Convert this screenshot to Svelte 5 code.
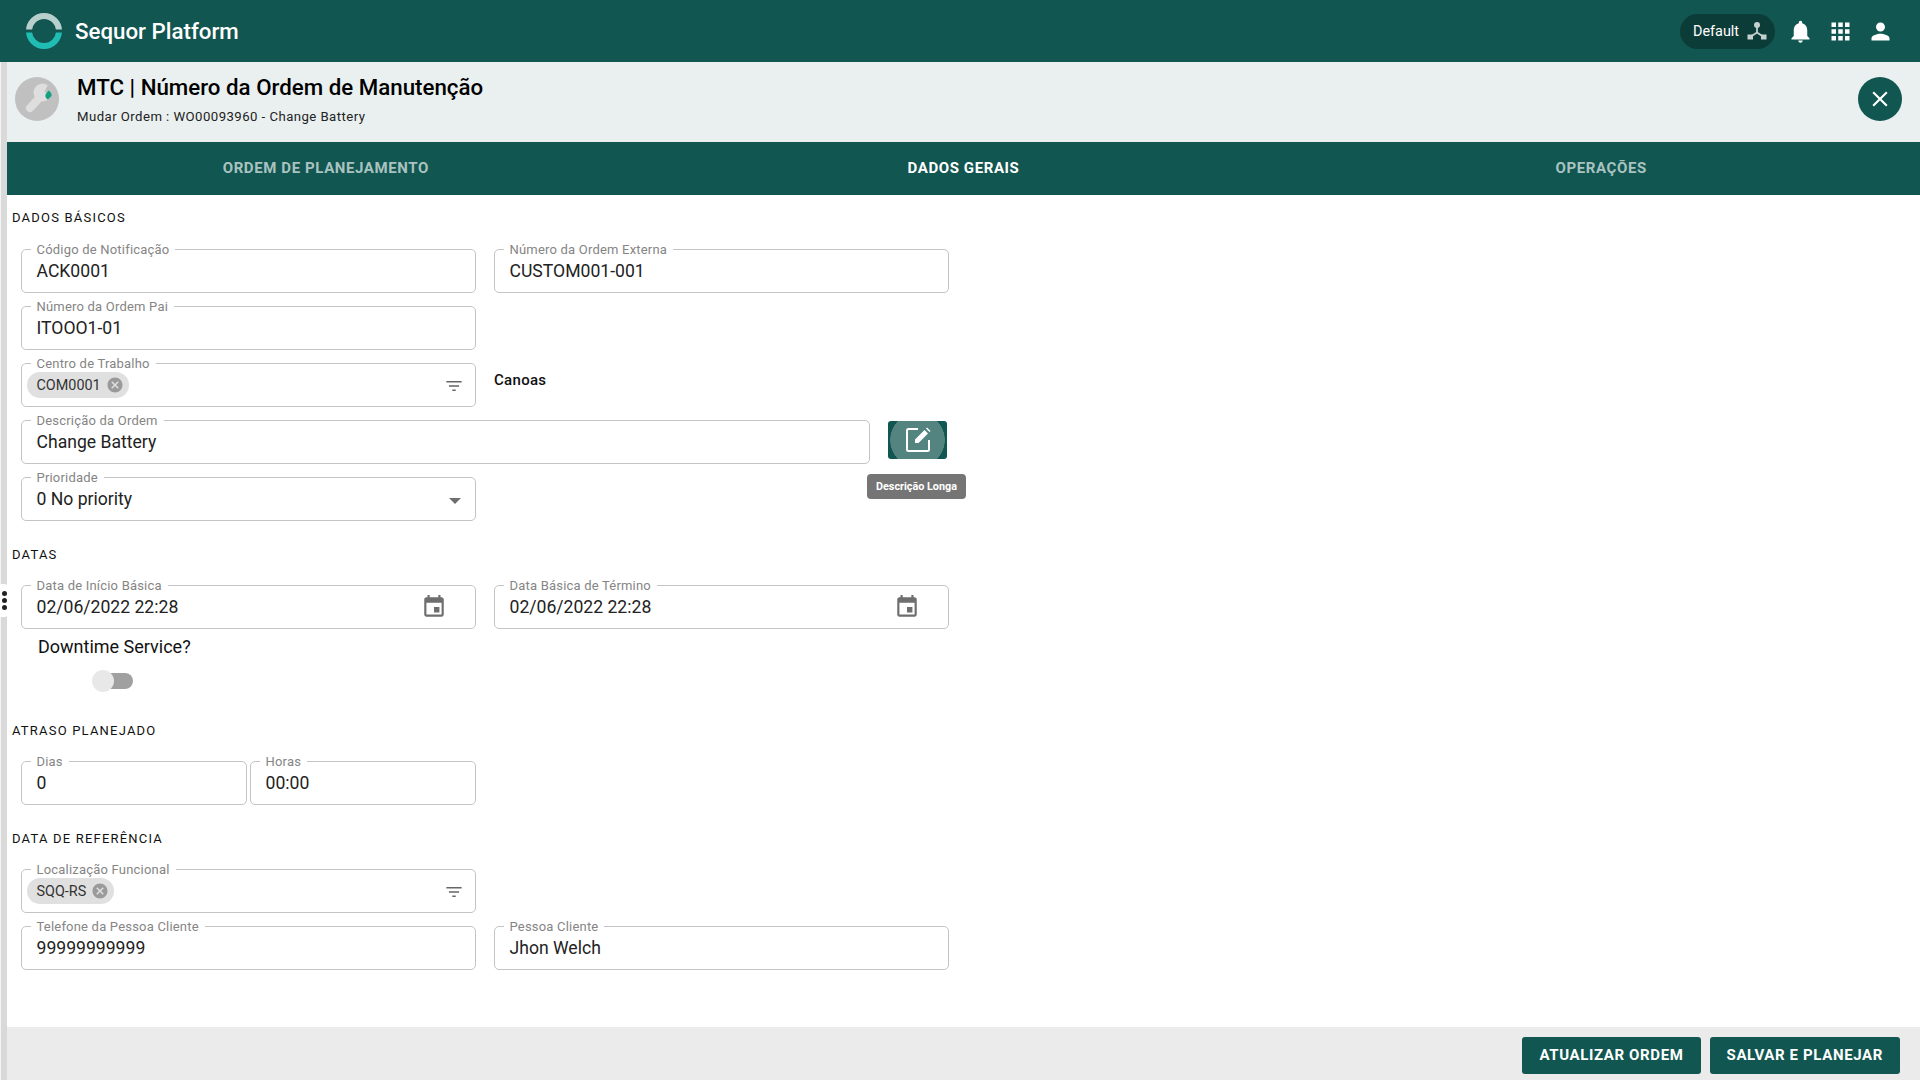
<script>
  const icons = {
    filter: "M10 18h4v-2h-4v2zM3 6v2h18V6H3zm3 7h12v-2H6v2z",
    event: "M17 12h-5v5h5v-5zM16 1v2H8V1H6v2H5c-1.11 0-1.99.9-1.99 2L3 19c0 1.1.89 2 2 2h14c1.1 0 2-.9 2-2V5c0-1.1-.9-2-2-2h-1V1h-2zm3 18H5V8h14v11z",
    cancel: "M12 2C6.47 2 2 6.47 2 12s4.47 10 10 10 10-4.47 10-10S17.53 2 12 2zm5 13.59L15.59 17 12 13.41 8.41 17 7 15.59 10.59 12 7 8.41 8.41 7 12 10.59 15.59 7 17 8.41 13.41 12 17 15.59z",
    bell: "M12 22c1.1 0 2-.9 2-2h-4c0 1.1.89 2 2 2zm6-6v-5c0-3.07-1.64-5.64-4.5-6.32V4c0-.83-.67-1.5-1.5-1.5s-1.5.67-1.5 1.5v.68C7.63 5.36 6 7.92 6 11v5l-2 2v1h16v-1l-2-2z",
    apps: "M4 8h4V4H4v4zm6 12h4v-4h-4v4zm-6 0h4v-4H4v4zm0-6h4v-4H4v4zm6 0h4v-4h-4v4zm6-10v4h4V4h-4zm-6 4h4V4h-4v4zm6 6h4v-4h-4v4zm0 6h4v-4h-4v4z",
    person: "M12 12c2.21 0 4-1.79 4-4s-1.79-4-4-4-4 1.79-4 4 1.79 4 4 4zm0 2c-2.67 0-8 1.34-8 4v2h16v-2c0-2.66-5.33-4-8-4z",
    close: "M19 6.41L17.59 5 12 10.59 6.41 5 5 6.41 10.59 12 5 17.59 6.41 19 12 13.41 17.59 19 19 17.59 13.41 12z"
  };
  const tabs = [
    { label: "ORDEM DE PLANEJAMENTO" },
    { label: "DADOS GERAIS", active: true },
    { label: "OPERAÇÕES" }
  ];
</script>

{#snippet icon(d, cls)}
  <svg class={cls} viewBox="0 0 24 24"><path {d} /></svg>
{/snippet}

{#snippet field(label, value, cls = "")}
  <div class="field {cls}">
    <span class="label">{label}</span>
    <span class="value">{value}</span>
  </div>
{/snippet}

{#snippet dateField(label, value)}
  <div class="field">
    <span class="label">{label}</span>
    <span class="value">{value}</span>
    {@render icon(icons.event, "cal")}
  </div>
{/snippet}

{#snippet chipField(label, value)}
  <div class="field">
    <span class="label">{label}</span>
    <span class="chip">{value}{@render icon(icons.cancel, "chip-x")}</span>
    {@render icon(icons.filter, "filter")}
  </div>
{/snippet}

<div class="app">
  <header class="topbar">
    <svg class="logo" viewBox="0 0 36 36">
      <clipPath id="logo-top"><rect x="0" y="0" width="36" height="16.500" /></clipPath>
      <clipPath id="logo-bottom"><rect x="0" y="19.500" width="36" height="16.500" /></clipPath>
      <circle cx="18" cy="18" r="15" fill="none" stroke="#b7d0cd" stroke-width="6" clip-path="url(#logo-top)" />
      <circle cx="18" cy="18" r="15" fill="none" stroke="#20bdb5" stroke-width="6" clip-path="url(#logo-bottom)" />
    </svg>
    <span class="brand">Sequor Platform</span>
    <div class="top-actions">
      <div class="pill">
        <span>Default</span>
        <svg class="hub" viewBox="0 0 20 20">
          <circle cx="10" cy="4" r="3" />
          <rect x="0.5" y="13.5" width="5.5" height="5" />
          <rect x="14" y="13.5" width="5.5" height="5" />
          <path d="M10 6v5.5M10 11.5L4 15.5M10 11.5l6 4" fill="none" stroke="#c4d0ce" stroke-width="1.8" />
        </svg>
      </div>
      {@render icon(icons.bell, "top-icon")}
      {@render icon(icons.apps, "top-icon")}
      {@render icon(icons.person, "top-icon")}
    </div>
  </header>

  <div class="body">
    <aside class="rail">
      <div class="handle"><i></i><i></i><i></i></div>
    </aside>

    <div class="page">
      <div class="head">
        <div class="avatar">
          <svg viewBox="0 0 44 44">
            <line x1="15" y1="31" x2="26" y2="19" stroke="#dedede" stroke-width="8" stroke-linecap="round" />
            <circle cx="27.500" cy="15.500" r="9" fill="#dedede" />
            <polygon points="29.500,14.500 34,6 42,13 33.500,18" fill="#c0c0c0" />
            <path d="M33.500 13.500C36 15 37 17 36.500 19L33 22.500C31 21.500 30 20 30.500 17.500z" fill="#12a07f" />
          </svg>
        </div>
        <div class="head-text">
          <h1>MTC | Número da Ordem de Manutenção</h1>
          <p>Mudar Ordem : WO00093960 - Change Battery</p>
        </div>
        <button class="close">{@render icon(icons.close, "close-icon")}</button>
      </div>

      <nav class="tabs">
        {#each tabs as tab}
          <div class="tab" class:active={tab.active}>{tab.label}</div>
        {/each}
      </nav>

      <main class="form">
        <h2 class="first">DADOS BÁSICOS</h2>
        <div class="grid">
          {@render field("Código de Notificação", "ACK0001")}
          {@render field("Número da Ordem Externa", "CUSTOM001-001")}
          {@render field("Número da Ordem Pai", "ITOOO1-01")}
          <div></div>
          {@render chipField("Centro de Trabalho", "COM0001")}
          <div class="canoas">Canoas</div>
          <div class="desc-row">
            {@render field("Descrição da Ordem", "Change Battery", "grow")}
            <div class="edit-wrap">
              <button class="edit">
                <svg viewBox="0 0 26 26">
                  <path d="M13 2H3.500A1.500 1.500 0 0 0 2 3.500v19A1.500 1.500 0 0 0 3.500 24h19a1.500 1.500 0 0 0 1.500-1.500V13" fill="none" stroke="#fff" stroke-width="2" />
                  <path d="M10 16v-3.500L19.500 3l3.500 3.500L13.500 16zM21 1.500l1-1 3.500 3.500-1 1z" fill="#fff" />
                </svg>
              </button>
              <div class="tooltip">Descrição Longa</div>
            </div>
          </div>
          <div class="field">
            <span class="label">Prioridade</span>
            <span class="value">0 No priority</span>
            <span class="arrow"></span>
          </div>
        </div>

        <h2 class="datas">DATAS</h2>
        <div class="grid">
          {@render dateField("Data de Início Básica", "02/06/2022 22:28")}
          {@render dateField("Data Básica de Término", "02/06/2022 22:28")}
        </div>
        <div class="downtime">Downtime Service?</div>
        <div class="toggle"><span class="track"></span><span class="thumb"></span></div>

        <h2 class="atraso">ATRASO PLANEJADO</h2>
        <div class="pair">
          {@render field("Dias", "0")}
          {@render field("Horas", "00:00")}
        </div>

        <h2 class="referencia">DATA DE REFERÊNCIA</h2>
        <div class="grid">
          {@render chipField("Localização Funcional", "SQQ-RS")}
          <div></div>
          {@render field("Telefone da Pessoa Cliente", "99999999999")}
          {@render field("Pessoa Cliente", "Jhon Welch")}
        </div>
      </main>

      <footer class="footer">
        <button>ATUALIZAR ORDEM</button>
        <button>SALVAR E PLANEJAR</button>
      </footer>
    </div>
  </div>
</div>

<style>
  :global(body) {
    margin: 0;
    background: #fff;
    font-family: Roboto, "Liberation Sans", sans-serif;
  }
  .app {
    height: 1080px;
    display: flex;
    flex-direction: column;
    overflow: hidden;
  }
  .topbar {
    height: 62px;
    flex: none;
    background: #115650;
    display: flex;
    align-items: center;
    padding: 0 26px 0 26px;
    color: #fff;
  }
  .logo {
    width: 36px;
    height: 36px;
    margin-right: 13px;
  }
  .brand {
    font-size: 22.300px;
    font-weight: 500;
    padding-bottom: 1px;
  }
  .top-actions {
    margin-left: auto;
    display: flex;
    align-items: center;
  }
  .pill {
    height: 35px;
    width: 95px;
    box-sizing: border-box;
    padding-left: 13px;
    border-radius: 18px;
    background: #0c3c38;
    display: flex;
    align-items: center;
    font-size: 14.400px;
    margin-right: 12px;
  }
  .hub {
    width: 20px;
    height: 20px;
    margin-left: 8px;
    fill: #c4d0ce;
  }
  .top-icon {
    width: 27px;
    height: 27px;
    fill: #fff;
    margin-left: 13px;
  }
  .pill + .top-icon {
    margin-left: 0;
  }
  .body {
    flex: 1;
    display: flex;
    min-height: 0;
  }
  .rail {
    width: 7px;
    flex: none;
    background: #d9d9d9;
    border-left: 1px solid #f4f4f4;
    box-sizing: border-box;
    position: relative;
  }
  .handle {
    position: absolute;
    left: -1px;
    top: 522px;
    width: 8px;
    height: 33px;
    background: #fff;
    border-radius: 0 4px 4px 0;
    display: flex;
    flex-direction: column;
    justify-content: center;
    gap: 2px;
    padding-left: 2px;
    box-sizing: border-box;
  }
  .handle i {
    width: 5px;
    height: 5px;
    border-radius: 50%;
    background: #222;
  }
  .page {
    flex: 1;
    min-width: 0;
    display: flex;
    flex-direction: column;
  }
  .head {
    height: 80px;
    box-sizing: border-box;
    flex: none;
    background: #eaf0f0;
    display: flex;
    align-items: flex-start;
    padding: 15px 18px 0 8px;
  }
  .avatar {
    width: 44px;
    height: 44px;
    border-radius: 50%;
    background: #c0c0c0;
    margin-right: 18px;
  }
  .avatar svg {
    display: block;
  }
  .head-text {
    flex: 1;
    margin-top: -5px;
  }
  h1 {
    margin: 0;
    font-size: 22.300px;
    font-weight: 500;
    line-height: 30px;
    color: #000;
  }
  .head-text p {
    margin: 7px 0 0;
    font-size: 13.200px;
    line-height: 15px;
    letter-spacing: 0.44px;
    color: #222;
  }
  .close {
    width: 44px;
    height: 44px;
    border: 0;
    border-radius: 50%;
    background: #115650;
    padding: 0;
    display: flex;
    align-items: center;
    justify-content: center;
  }
  .close-icon {
    width: 26px;
    height: 26px;
    fill: #fff;
  }
  .tabs {
    height: 53px;
    flex: none;
    background: #115650;
    display: grid;
    grid-template-columns: repeat(3, 1fr);
  }
  .tab {
    display: flex;
    align-items: center;
    justify-content: center;
    font-size: 15px;
    font-weight: 700;
    letter-spacing: 0.6px;
    color: #a9c3c0;
    padding-bottom: 2px;
  }
  .tab.active {
    color: #fff;
  }
  .form {
    flex: 1;
    min-height: 0;
    padding: 0 0 0 5px;
  }
  h2 {
    margin: 26px 0 23px;
    font-size: 13px;
    line-height: 14px;
    font-weight: 400;
    letter-spacing: 1.2px;
    color: #111;
  }
  h2.first {
    margin: 16px 0 24px;
  }
  h2.datas {
    margin-top: 27px;
  }
  h2.atraso {
    margin: 32px 0 23px;
  }
  h2.referencia {
    margin-top: 27px;
  }
  .grid {
    display: grid;
    grid-template-columns: 455px 455px;
    column-gap: 18px;
    row-gap: 13px;
    padding-left: 9px;
  }
  .field {
    position: relative;
    height: 44px;
    box-sizing: border-box;
    border: 1px solid #c4c4c4;
    border-radius: 5px;
    display: flex;
    align-items: center;
    padding: 0 15px 0 14.500px;
    background: #fff;
    min-width: 0;
  }
  .label {
    position: absolute;
    left: 8.500px;
    top: -8px;
    padding: 0 6px;
    background: #fff;
    font-size: 13px;
    line-height: 15px;
    letter-spacing: 0.2px;
    color: #858585;
    white-space: nowrap;
  }
  .value {
    font-size: 17.600px;
    line-height: 20px;
    color: #222;
  }
  .chip {
    display: inline-flex;
    align-items: center;
    height: 26px;
    margin-left: -10px;
    padding: 0 5px 0 10px;
    border-radius: 13px;
    background: #e0e0e0;
    font-size: 14.400px;
    color: #333;
  }
  .chip-x {
    width: 18px;
    height: 18px;
    margin-left: 5px;
    fill: #9a9a9a;
  }
  .filter {
    position: absolute;
    right: 9px;
    top: 9.500px;
    width: 24px;
    height: 24px;
    fill: #666;
    transform: scale(0.85);
  }
  .cal {
    position: absolute;
    right: 28px;
    top: 8px;
    width: 26px;
    height: 26px;
    fill: #6e6e6e;
  }
  .arrow {
    position: absolute;
    right: 14px;
    top: 20px;
    width: 0;
    height: 0;
    border: 6px solid transparent;
    border-top: 6px solid #6e6e6e;
    border-bottom: 0;
  }
  .canoas {
    font-size: 15px;
    font-weight: 500;
    letter-spacing: 0.3px;
    color: #111;
    padding-top: 8px;
  }
  .desc-row {
    grid-column: 1 / 3;
    display: flex;
  }
  .grow {
    width: 849px;
    flex: none;
  }
  .edit-wrap {
    position: relative;
    margin-left: 18px;
    margin-top: 1px;
  }
  .edit {
    display: flex;
    align-items: center;
    justify-content: center;
    width: 59px;
    height: 38px;
    padding: 0;
    border: 0;
    border-radius: 3px;
    background: radial-gradient(circle at 50% 50%, #548480 27px, #115650 27.500px);
  }
  .edit svg {
    width: 26px;
    height: 26px;
  }
  .tooltip {
    position: absolute;
    left: -21px;
    top: 53px;
    width: 99px;
    height: 25px;
    border-radius: 4px;
    background: #757575;
    color: #fff;
    font-size: 10.800px;
    font-weight: 700;
    line-height: 25px;
    text-align: center;
    white-space: nowrap;
  }
  .downtime {
    margin: 7px 0 0 26px;
    font-size: 18px;
    line-height: 22px;
    color: #111;
  }
  .toggle {
    position: relative;
    margin: 12px 0 0 80px;
    width: 41px;
    height: 22px;
  }
  .track {
    position: absolute;
    left: 8px;
    top: 3px;
    width: 33px;
    height: 16px;
    border-radius: 8px;
    background: #a0a0a0;
  }
  .thumb {
    position: absolute;
    left: 0;
    top: 0;
    width: 22px;
    height: 22px;
    border-radius: 50%;
    background: #e8e8e8;
  }
  .pair {
    display: flex;
    gap: 3px;
    width: 455px;
    padding-left: 9px;
  }
  .pair .field {
    flex: 1;
  }
  .footer {
    height: 53px;
    flex: none;
    box-sizing: border-box;
    background: #ebebeb;
    display: flex;
    justify-content: flex-end;
    align-items: flex-end;
    gap: 9px;
    padding: 0 20px 6px 0;
  }
  .footer button {
    height: 37px;
    padding: 0 17px 1px;
    border: 0;
    border-radius: 3px;
    background: #115650;
    color: #fff;
    font-family: inherit;
    font-size: 15px;
    font-weight: 700;
    letter-spacing: 0.63px;
  }
</style>
